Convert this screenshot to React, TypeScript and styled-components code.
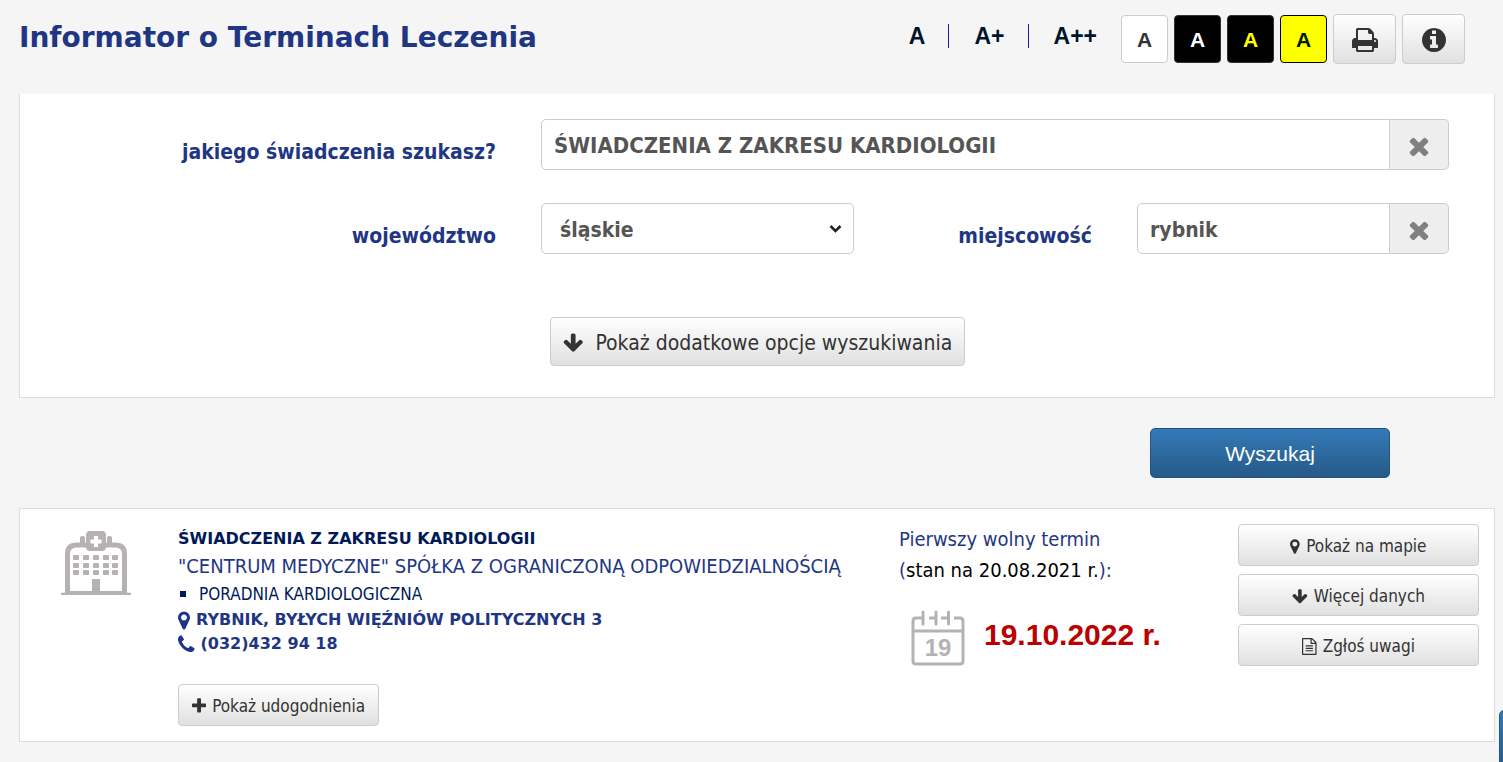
import React from "react";
import styled, { createGlobalStyle, css } from "styled-components";

const humanist = `"DejaVu Sans Condensed", Tahoma, "Noto Sans", sans-serif`;
const wide = `"DejaVu Sans", Verdana, sans-serif`;
const grotesk = `"Liberation Sans", Arial, sans-serif`;

const navy = "#1f3684";
const darkNavy = "#001a57";
const line = "#dddddd";

const GlobalStyle = createGlobalStyle`
  *, *::before, *::after { box-sizing: border-box; }
  body {
    margin: 0;
    background: #f5f5f5;
    color: ${navy};
    font-family: ${humanist};
    font-size: 17px;
  }
  h1, h2, p, ul { margin: 0; padding: 0; }
  button, input, select { font-family: inherit; margin: 0; }
  button { cursor: pointer; }
`;

const icons = {
  times:
    "M1490 1322q0 40-28 68l-136 136q-28 28-68 28t-68-28l-294-294-294 294q-28 28-68 28t-68-28l-136-136q-28-28-28-68t28-68l294-294-294-294q-28-28-28-68t28-68l136-136q28-28 68-28t68 28l294 294 294-294q28-28 68-28t68 28l136 136q28 28 28 68t-28 68l-294 294 294 294q28 28 28 68z",
  arrowDown:
    "M1675 832q0 53-37 90l-651 652q-39 37-91 37-53 0-90-37l-651-652q-38-36-38-90 0-53 38-91l74-75q39-37 91-37 53 0 90 37l294 294v-704q0-52 38-90t90-38h128q52 0 90 38t38 90v704l294-294q37-37 90-37 52 0 91 37l75 75q37 39 37 91z",
  plus:
    "M1600 736v192q0 40-28 68t-68 28h-416v416q0 40-28 68t-68 28h-192q-40 0-68-28t-28-68v-416h-416q-40 0-68-28t-28-68v-192q0-40 28-68t68-28h416v-416q0-40 28-68t68-28h192q40 0 68 28t28 68v416h416q40 0 68 28t28 68z",
  marker:
    "M1152 640q0-106-75-181t-181-75-181 75-75 181 75 181 181 75 181-75 75-181zm256 0q0 109-33 179l-364 774q-16 33-47.5 52t-67.5 19-67.5-19-46.5-52l-365-774q-33-70-33-179 0-212 150-362t362-150 362 150 150 362z",
  phone:
    "M1600 1240q0 27-10 70.5t-21 68.5q-21 50-122 106-94 51-186 51-27 0-53-3.5t-57.5-12.5-47-14.5-55.5-20.5-49-18q-98-35-175-83-127-79-264-216t-216-264q-48-77-83-175-3-9-18-49t-20.5-55.5-14.5-47-12.5-57.5-3.5-53q0-92 51-186 56-101 106-122 25-11 68.5-21t70.5-10q14 0 21 3 18 6 53 76 11 19 30 54t35 63.5 31 53.5q3 4 17.5 25t21.5 35.5 7 28.5q0 20-28.5 50t-62 55-62 53-28.5 46q0 9 5 22.5t8.5 20.5 14 24 11.5 19q76 137 174 235t235 174q2 1 19 11.5t24 14 20.5 8.5 22.5 5q18 0 46-28.5t53-62 55-62 50-28.5q14 0 28.5 7t35.5 21.5 25 17.5q25 15 53.5 31t63.5 35 54 30q70 35 76 53 3 7 3 21z",
  print:
    "M448 1536h896v-256h-896v256zm0-640h896v-384h-160q-40 0-68-28t-28-68v-160h-640v640zm1152 64q0-26-19-45t-45-19-45 19-19 45 19 45 45 19 45-19 19-45zm128 0v416q0 13-9.5 22.5t-22.5 9.5h-224v160q0 40-28 68t-68 28h-960q-40 0-68-28t-28-68v-160h-224q-13 0-22.5-9.5t-9.5-22.5v-416q0-79 56.5-135.5t135.5-56.5h64v-544q0-40 28-68t68-28h672q40 0 88 20t76 48l152 152q28 28 48 76t20 88v256h64q79 0 135.5 56.5t56.5 135.5z",
  info:
    "M1152 1376v-160q0-14-9-23t-23-9h-96v-512q0-14-9-23t-23-9h-320q-14 0-23 9t-9 23v160q0 14 9 23t23 9h96v320h-96q-14 0-23 9t-9 23v160q0 14 9 23t23 9h448q14 0 23-9t9-23zm-128-896v-160q0-14-9-23t-23-9h-192q-14 0-23 9t-9 23v160q0 14 9 23t23 9h192q14 0 23-9t9-23zm640 416q0 209-103 385.5t-279.5 279.5-385.5 103-385.5-103-279.5-279.5-103-385.5 103-385.5 279.5-279.5 385.5-103 385.5 103 279.5 279.5 103 385.5z",
  file:
    "M1596 380q28 28 48 76t20 88v1152q0 40-28 68t-68 28h-1344q-40 0-68-28t-28-68v-1600q0-40 28-68t68-28h896q40 0 88 20t76 48zm-444-244v376h376q-10-29-22-41l-313-313q-12-12-41-22zm384 1528v-1024h-416q-40 0-68-28t-28-68v-416h-768v1536h1280zm-1024-864q0-14 9-23t23-9h704q14 0 23 9t9 23v64q0 14-9 23t-23 9h-704q-14 0-23-9t-9-23v-64zm736 224q14 0 23 9t9 23v64q0 14-9 23t-23 9h-704q-14 0-23-9t-9-23v-64q0-14 9-23t23-9h704zm0 256q14 0 23 9t9 23v64q0 14-9 23t-23 9h-704q-14 0-23-9t-9-23v-64q0-14 9-23t23-9h704z",
};

/* Horizontal extent of each glyph in the 1792-unit icon grid. */
const extents: Record<keyof typeof icons, [number, number]> = {
  times: [256, 1280],
  arrowDown: [64, 1664],
  plus: [192, 1408],
  marker: [384, 1024],
  phone: [192, 1408],
  print: [64, 1664],
  info: [128, 1536],
  file: [128, 1536],
};

const Glyph = styled.svg<{ $size: number }>`
  display: block;
  flex: none;
  height: ${(p) => p.$size}px;
  fill: currentColor;
`;

function Icon({ name, size }: { name: keyof typeof icons; size: number }) {
  const [x, w] = extents[name];
  return (
    <Glyph $size={size} viewBox={`${x} 0 ${w} 1792`} aria-hidden="true">
      <path d={icons[name]} />
    </Glyph>
  );
}

const Page = styled.div`
  padding: 0 8px 20px 19px;
  overflow-x: clip;
`;

const Header = styled.header`
  display: flex;
  justify-content: space-between;
  align-items: flex-start;
  min-height: 94px;
  padding: 14px 30px 0 0;
`;

const Title = styled.h1`
  font: bold 28px/48px ${wide};
`;

const Tools = styled.div`
  display: flex;
  align-items: center;
  gap: 6px;
`;

const SizeLinks = styled.nav`
  display: flex;
  align-items: center;
  margin: 0 18px 6px 0;
`;

const SizeLink = styled.a`
  color: #00142b;
  font: bold 23px/24px ${grotesk};
  text-decoration: none;

  & + & {
    margin-left: 23px;
    padding-left: 25px;
    border-left: 1px solid #1a1a9c;
  }
`;

const ContrastButton = styled.button<{ $bg: string; $fg: string; $edge: string }>`
  width: 47px;
  height: 48px;
  padding: 2px 0 0;
  border: 1px solid ${(p) => p.$edge};
  border-radius: 4px;
  background: ${(p) => p.$bg};
  color: ${(p) => p.$fg};
  font: bold 21px/24px ${grotesk};
`;

const raised = css`
  display: flex;
  align-items: center;
  justify-content: center;
  border: 1px solid #cccccc;
  border-radius: 4px;
  background: linear-gradient(#ffffff, #e0e0e0);
  color: #333333;
`;

const IconButton = styled.button`
  ${raised}
  width: 63px;
  height: 50px;
  padding: 2px 0 0;
`;

const Panel = styled.section`
  border: 1px solid ${line};
  background: #ffffff;
`;

const SearchPanel = styled(Panel)`
  border-top: 0;
  padding: 25px 45px 31px 0;
`;

const Fields = styled.div`
  display: grid;
  grid-template-columns: 476fr 313fr 193fr 312fr;
  gap: 33px 45px;
`;

const Label = styled.label`
  padding-top: 19px;
  color: ${navy};
  font-size: 21px;
  line-height: 28px;
  font-weight: bold;
  text-align: right;
  white-space: nowrap;
`;

const control = css`
  width: 100%;
  min-width: 0;
  height: 51px;
  border: 1px solid #cccccc;
  border-radius: 5px;
  background: #ffffff;
  color: #555555;
  font-size: 21px;
  font-weight: bold;
`;

const TextInput = styled.input`
  ${control}
  flex: 1;
  padding: 2px 12px 0;
  border-radius: 5px 0 0 5px;
`;

const InputGroup = styled.div<{ $wide?: boolean }>`
  display: flex;
  grid-column: ${(p) => (p.$wide ? "span 3" : "auto")};

  ${TextInput} {
    font-size: ${(p) => (p.$wide ? 22 : 21)}px;
  }
`;

const ClearButton = styled.button`
  display: flex;
  align-items: center;
  justify-content: center;
  width: 59px;
  padding: 2px 0 0;
  border: 1px solid #cccccc;
  border-left: 0;
  border-radius: 0 5px 5px 0;
  background: #eeeeee;
  color: #808080;
`;

const SelectWrap = styled.div`
  position: relative;
`;

const Select = styled.select`
  ${control}
  appearance: none;
  padding: 2px 40px 0 18px;
`;

const Chevron = styled.svg`
  position: absolute;
  top: 21px;
  right: 12px;
  width: 13px;
  height: 10px;
  pointer-events: none;
`;

const MoreButton = styled.button`
  ${raised}
  gap: 12px;
  height: 49px;
  margin: 63px 0 0 530px;
  padding: 2px 12px 0;
  font-size: 21px;
`;

const SubmitRow = styled.div`
  display: flex;
  justify-content: flex-end;
  padding: 30px 105px;
`;

const SubmitButton = styled.button`
  width: 240px;
  height: 50px;
  padding: 2px 0 0;
  border: 1px solid #245580;
  border-radius: 5px;
  background: linear-gradient(#337ab7, #265a88);
  color: #ffffff;
  && { font: 21px/24px ${grotesk}; }
`;

const Result = styled(Panel)`
  display: grid;
  grid-template-columns: 143fr 721fr 339fr 241fr;
  padding: 15px;
`;

const Hospital = styled.svg`
  display: block;
  width: 72px;
  height: 66px;
  margin: 6px 0 0 25px;
`;

const Service = styled.h2`
  color: ${darkNavy};
  font: bold 16px/24px ${wide};
`;

const Provider = styled.p`
  font-size: 20px;
  line-height: 31px;
`;

const Clinics = styled.ul`
  list-style: none;
  margin-bottom: 2px;
  color: ${darkNavy};
  line-height: 24px;
`;

const Clinic = styled.li`
  display: flex;
  align-items: center;
  gap: 13px;
  padding-left: 2px;

  &::before {
    content: "";
    width: 6px;
    height: 6px;
    background: currentColor;
  }
`;

const Contact = styled.p`
  display: flex;
  align-items: center;
  gap: 6px;
  font: bold 16px/24px ${wide};
`;

const ActionButton = styled.button`
  ${raised}
  gap: 6px;
  height: 42px;
  padding: 2px 13px 0;
  font-size: 17px;
`;

const Details = styled.div`
  padding-top: 3px;

  ${ActionButton} {
    margin-top: 28px;
  }
`;

const Appointment = styled.div`
  font-size: 20px;
  line-height: 31px;
`;

const Stamp = styled.span`
  color: #000000;
`;

const DateRow = styled.div`
  display: flex;
  align-items: center;
  gap: 19px;
  padding: 24px 0 0 12px;
`;

const Calendar = styled.svg`
  width: 54px;
  height: 56px;
`;

const DateText = styled.strong`
  padding-bottom: 6px;
  color: #bb0000;
  font: bold 30px/36px ${grotesk};
`;

const Actions = styled.div`
  display: flex;
  flex-direction: column;
  gap: 8px;
`;

const SideTab = styled.button`
  position: fixed;
  right: -36px;
  bottom: -8px;
  width: 40px;
  height: 60px;
  border: 1px solid #245580;
  border-radius: 5px;
  background: linear-gradient(#337ab7, #265a88);
`;

function HospitalArt() {
  return (
    <Hospital viewBox="0 0 72 66" aria-hidden="true" fill="#b5b2b1">
      <path
        d="M7.500 62V24q0-9 9-9h39q9 0 9 9v38"
        fill="none"
        stroke="#b5b2b1"
        strokeWidth="5"
      />
      <path d="M5 61h62v1.500l4 .5v2H1v-2l4-.5z" />
      <rect x="20" y="6" width="5" height="9" rx="2" />
      <rect x="47" y="6" width="5" height="9" rx="2" />
      <rect x="26" y="1" width="20" height="20" rx="4" />
      <path d="M34 6h4v3.500h3.500v4H38V17h-4v-3.500h-3.500v-4H34z" fill="#ffffff" />
      {[25, 33, 40].map((y) =>
        [13, 23, 33, 43, 52].map((x) => (
          <rect key={`${x}-${y}`} x={x} y={y} width="6" height="5" rx="1" />
        )),
      )}
      <path d="M32 50q0-1 1-1h6q1 0 1 1v11h-8z" />
    </Hospital>
  );
}

function CalendarArt() {
  return (
    <Calendar viewBox="0 0 54 56" aria-hidden="true">
      <g fill="none" stroke="#b3b3b3" strokeWidth="3">
        <path d="M12 8H5q-3 0-3 3v40q0 3 3 3h44q3 0 3-3V11q0-3-3-3h-6M18 8h7M30 8h7M2 21h50" />
        <path d="M12 2v12M25 2v12M37.500 2v12" strokeLinecap="round" />
      </g>
      <text
        x="27"
        y="46"
        fill="#b3b3b3"
        fontFamily="'Liberation Sans', Arial, sans-serif"
        fontSize="24"
        fontWeight="bold"
        textAnchor="middle"
      >
        19
      </text>
    </Calendar>
  );
}

export default function App() {
  return (
    <>
      <GlobalStyle />
      <Page>
        <Header>
          <Title>Informator o Terminach Leczenia</Title>
          <Tools>
            <SizeLinks aria-label="Rozmiar tekstu">
              <SizeLink href="#a">A</SizeLink>
              <SizeLink href="#a1">A+</SizeLink>
              <SizeLink href="#a2">A++</SizeLink>
            </SizeLinks>
            <ContrastButton $bg="#ffffff" $fg="#333333" $edge="#cccccc">A</ContrastButton>
            <ContrastButton $bg="#000000" $fg="#ffffff" $edge="#333333">A</ContrastButton>
            <ContrastButton $bg="#000000" $fg="#ffff00" $edge="#333333">A</ContrastButton>
            <ContrastButton $bg="#ffff00" $fg="#001a00" $edge="#000000">A</ContrastButton>
            <IconButton aria-label="Drukuj">
              <Icon name="print" size={28} />
            </IconButton>
            <IconButton aria-label="Informacje">
              <Icon name="info" size={28} />
            </IconButton>
          </Tools>
        </Header>

        <form onSubmit={(e) => e.preventDefault()}>
          <SearchPanel>
            <Fields>
              <Label htmlFor="service">jakiego świadczenia szukasz?</Label>
              <InputGroup $wide>
                <TextInput id="service" defaultValue="ŚWIADCZENIA Z ZAKRESU KARDIOLOGII" />
                <ClearButton type="button" aria-label="Wyczyść świadczenie">
                  <Icon name="times" size={28} />
                </ClearButton>
              </InputGroup>
              <Label htmlFor="region">województwo</Label>
              <SelectWrap>
                <Select id="region" defaultValue="śląskie">
                  <option>śląskie</option>
                </Select>
                <Chevron viewBox="0 0 13 10" aria-hidden="true">
                  <path d="M1.500 2l5 5 5-5" fill="none" stroke="#222222" strokeWidth="2.500" />
                </Chevron>
              </SelectWrap>
              <Label htmlFor="city">miejscowość</Label>
              <InputGroup>
                <TextInput id="city" defaultValue="rybnik" />
                <ClearButton type="button" aria-label="Wyczyść miejscowość">
                  <Icon name="times" size={28} />
                </ClearButton>
              </InputGroup>
            </Fields>
            <MoreButton type="button">
              <Icon name="arrowDown" size={22} />
              Pokaż dodatkowe opcje wyszukiwania
            </MoreButton>
          </SearchPanel>
          <SubmitRow>
            <SubmitButton type="submit">Wyszukaj</SubmitButton>
          </SubmitRow>
        </form>

        <Result>
          <HospitalArt />
          <Details>
            <Service>ŚWIADCZENIA Z ZAKRESU KARDIOLOGII</Service>
            <Provider>"CENTRUM MEDYCZNE" SPÓŁKA Z OGRANICZONĄ ODPOWIEDZIALNOŚCIĄ</Provider>
            <Clinics>
              <Clinic>PORADNIA KARDIOLOGICZNA</Clinic>
            </Clinics>
            <Contact>
              <Icon name="marker" size={21} />
              RYBNIK, BYŁYCH WIĘŹNIÓW POLITYCZNYCH 3
            </Contact>
            <Contact>
              <Icon name="phone" size={21} />
              (032)432 94 18
            </Contact>
            <ActionButton type="button">
              <Icon name="plus" size={18} />
              Pokaż udogodnienia
            </ActionButton>
          </Details>
          <Appointment>
            <p>Pierwszy wolny termin</p>
            <p>
              (<Stamp>stan na 20.08.2021 r.</Stamp>):
            </p>
            <DateRow>
              <CalendarArt />
              <DateText>19.10.2022 r.</DateText>
            </DateRow>
          </Appointment>
          <Actions>
            <ActionButton type="button">
              <Icon name="marker" size={17} />
              Pokaż na mapie
            </ActionButton>
            <ActionButton type="button">
              <Icon name="arrowDown" size={17} />
              Więcej danych
            </ActionButton>
            <ActionButton type="button">
              <Icon name="file" size={17} />
              Zgłoś uwagi
            </ActionButton>
          </Actions>
        </Result>
      </Page>
      <SideTab aria-label="Pomoc" />
    </>
  );
}
